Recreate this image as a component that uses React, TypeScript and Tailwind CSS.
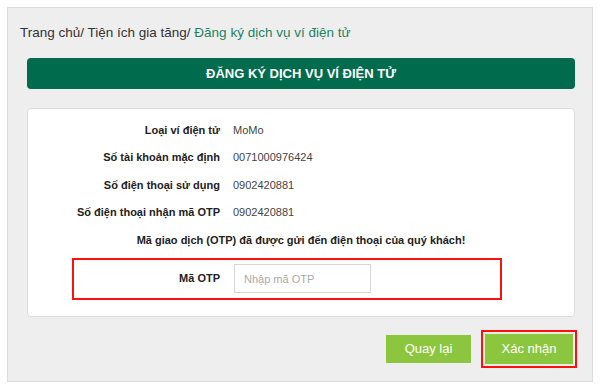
const ROWS = [
  { label: "Loại ví điện tử", value: "MoMo" },
  { label: "Số tài khoản mặc định", value: "0071000976424" },
  { label: "Số điện thoại sử dụng", value: "0902420881" },
  { label: "Số điện thoại nhận mã OTP", value: "0902420881" },
];

export default function App() {
  return (
    <div className="w-[600px] h-[388px] bg-white pt-[7px] pl-[7px] font-['Liberation_Sans',Arial,sans-serif]">
      <div className="w-[586px] h-[375px] bg-[#eeeeee] border border-[#dcdcdc] pt-[16px]">
        {/* breadcrumb */}
        <div className="pl-[12px] h-[17px] leading-[17px] text-[13.5px] text-[#333333]">
          Trang chủ/ Tiện ích gia tăng/ <span className="text-[#22835f]">Đăng ký dịch vụ ví điện tử</span>
        </div>

        <div className="ml-[19px] mt-[17px] w-[548px] h-[31px] rounded-[4px] bg-[#006b4d] flex items-center justify-center text-white text-[13px] font-bold">
          ĐĂNG KÝ DỊCH VỤ VÍ ĐIỆN TỬ
        </div>

        <div className="ml-[19px] mt-[19px] w-[548px] h-[209px] rounded-[4px] bg-white border border-[#dddddd] pt-[7px]">
          {ROWS.map((r) => (
            <div key={r.label} className="flex items-center h-[27.5px]">
              <div className="w-[192px] text-right text-[11px] font-bold text-[#222222]">{r.label}</div>
              <div className="ml-[13px] text-[11px] text-[#444444]">{r.value}</div>
            </div>
          ))}
          <div className="h-[27.5px] flex items-center justify-center text-[11px] font-bold text-[#222222]">
            Mã giao dịch (OTP) đã được gửi đến điện thoại của quý khách!
          </div>

          <div className="ml-[44px] mt-[4px] w-[430px] h-[42px] border-2 border-[#ff1010] flex items-center">
            <div className="w-[146px] text-right text-[11px] font-bold text-[#222222]">Mã OTP</div>
            <input
              placeholder="Nhập mã OTP"
              className="ml-[14px] w-[137px] h-[29px] border border-[#d6d6d6] bg-white px-[9px] text-[11px] text-[#333333] placeholder:text-[#aaaaaa] outline-none"
            />
          </div>
        </div>

        <div className="mt-[13px] pr-[15px] flex items-center justify-end gap-[10px]">
          <button className="w-[85px] h-[28px] bg-[#8cc63f] text-white text-[13px]">Quay lại</button>
          <div className="w-[96px] h-[38px] border-2 border-[#ff1010] p-px">
            <button className="w-full h-full bg-[#8cc63f] border border-[#e4f1d2] text-white text-[13px]">
              Xác nhận
            </button>
          </div>
        </div>
      </div>
    </div>
  );
}
